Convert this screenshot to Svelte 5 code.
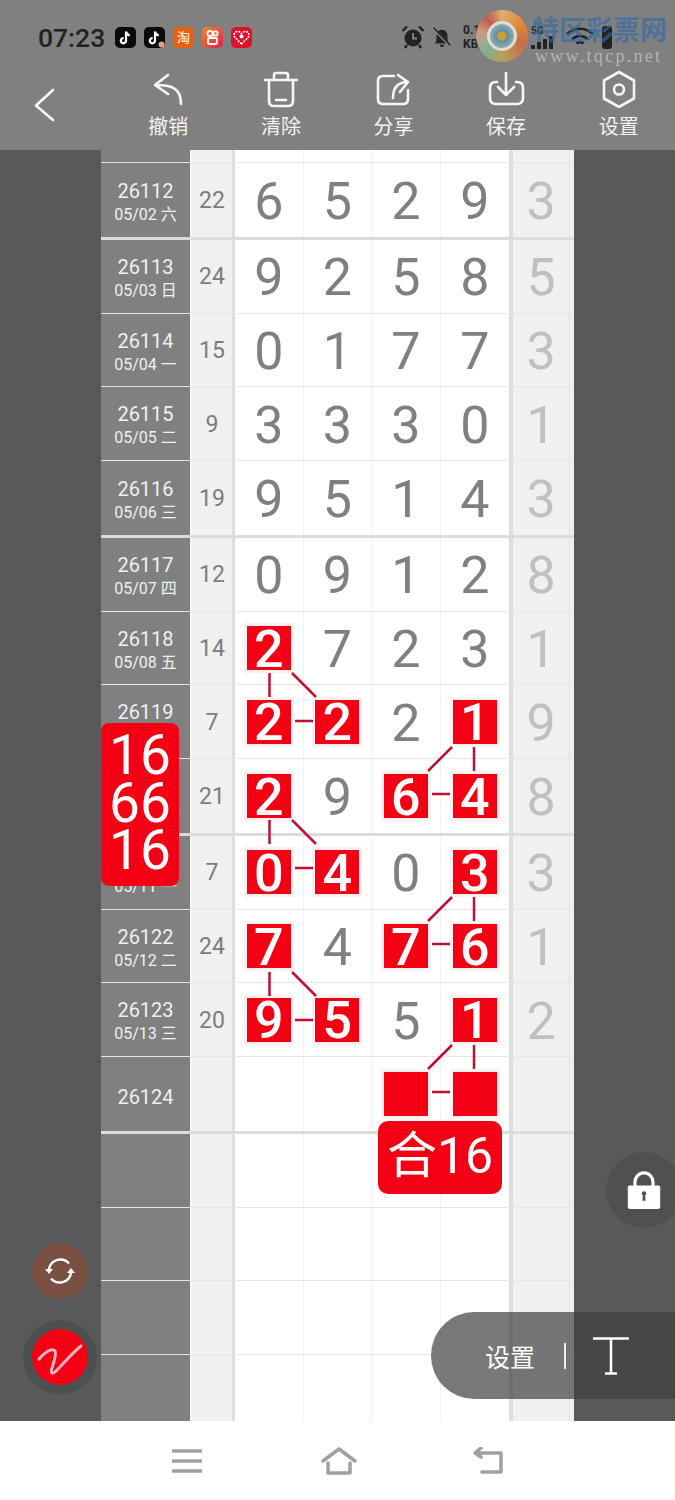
<script>
	const rows = [
		{ no: '26112', date: '05/02 六', sum: '22', d: '6529', last: '3', hit: [], thick: true },
		{ no: '26113', date: '05/03 日', sum: '24', d: '9258', last: '5', hit: [] },
		{ no: '26114', date: '05/04 一', sum: '15', d: '0177', last: '3', hit: [] },
		{ no: '26115', date: '05/05 二', sum: '9', d: '3330', last: '1', hit: [] },
		{ no: '26116', date: '05/06 三', sum: '19', d: '9514', last: '3', hit: [], thick: true },
		{ no: '26117', date: '05/07 四', sum: '12', d: '0912', last: '8', hit: [] },
		{ no: '26118', date: '05/08 五', sum: '14', d: '2723', last: '1', hit: [0] },
		{ no: '26119', date: '05/09 六', sum: '7', d: '2221', last: '9', hit: [0, 1, 3] },
		{ no: '26120', date: '05/10 日', sum: '21', d: '2964', last: '8', hit: [0, 2, 3], thick: true },
		{ no: '26121', date: '05/11 一', sum: '7', d: '0403', last: '3', hit: [0, 1, 3] },
		{ no: '26122', date: '05/12 二', sum: '24', d: '7476', last: '1', hit: [0, 2, 3] },
		{ no: '26123', date: '05/13 三', sum: '20', d: '9551', last: '2', hit: [0, 1, 3] },
		{ no: '26124', date: '', sum: '', d: '    ', last: '', hit: [2, 3], thick: true },
		{ no: '', date: '', sum: '', d: '    ', last: '', hit: [] },
		{ no: '', date: '', sum: '', d: '    ', last: '', hit: [] },
		{ no: '', date: '', sum: '', d: '    ', last: '', hit: [] },
		{ no: '', date: '', sum: '', d: '    ', last: '', hit: [] }
	];

	// connector groups: y of the upper square's bottom edge
	const leftLinks = [673, 820, 972];
	const rightLinks = [747, 897, 1045];
</script>

<div class="screen">
	<header class="top">
		<div class="status">
			<span class="time">07:23</span>
			<div class="apps">
				<span class="app black">
					<svg viewBox="0 0 21 21" width="21" height="21"><path d="M11 4.5v9.2a2.6 2.6 0 1 1-2.4-2.6M11 4.5c.3 2.2 1.7 3.6 3.8 3.8" fill="none" stroke="#fff" stroke-width="2.2" /></svg>
				</span>
				<span class="app black">
					<svg viewBox="0 0 21 21" width="21" height="21"><path d="M11 4.5v9.2a2.6 2.6 0 1 1-2.4-2.6M11 4.5c.3 2.2 1.7 3.6 3.8 3.8" fill="none" stroke="#fff" stroke-width="2.2" /><circle cx="17.5" cy="17.5" r="3" fill="#e0a080" /></svg>
				</span>
				<span class="app orange">淘</span>
				<span class="app pink">
					<svg viewBox="0 0 21 21" width="21" height="21"><circle cx="8" cy="6.5" r="2.6" fill="none" stroke="#fff" stroke-width="1.8" /><circle cx="13.5" cy="6.5" r="2.2" fill="none" stroke="#fff" stroke-width="1.8" /><rect x="6" y="11" width="9" height="6" rx="1.5" fill="none" stroke="#fff" stroke-width="1.8" /></svg>
				</span>
				<span class="app red">
					<svg viewBox="0 0 21 21" width="21" height="21"><path d="M10.5 17 4 10.5C2 8 3.500 4.500 6.800 4.500c1.600 0 2.900.9 3.700 2.200.8-1.300 2.100-2.200 3.700-2.200 3.300 0 4.800 3.500 2.800 6Z" fill="none" stroke="#fff" stroke-width="1.500" stroke-dasharray="2 1" /><circle cx="10.500" cy="9.500" r="2" fill="#fff" /></svg>
				</span>
			</div>
			<div class="sys">
				<svg viewBox="0 0 24 24" width="24" height="24"><circle cx="12" cy="13" r="8.500" fill="#222" /><path d="M12 8v5.500h4" fill="none" stroke="#888" stroke-width="1.800" /><path d="M1.500 6 6 1.500M22.500 6 18 1.500M6 20l-2 3M18 20l2 3" stroke="#222" stroke-width="2.400" /></svg>
				<svg viewBox="0 0 24 24" width="22" height="24"><path d="M4 19c2-2 2-4 2-8s2.500-7 6-7 6 3 6 7 0 6 2 8Z" fill="#222" /><path d="M9.500 20.500a2.500 2.500 0 0 0 5 0" fill="#222" /><path d="M3 3l18 19" stroke="#888" stroke-width="3" /><path d="M3 2l18 19" stroke="#222" stroke-width="1.600" /></svg>
				<span class="speed">0.11<br />KB/s</span>
				<div class="cell">
					<span class="bars"><i></i><i></i><i></i><i></i></span>
				</div>
				<div class="cell second">
					<span class="fiveg">5G</span>
					<span class="bars"><i></i><i></i><i></i><i></i></span>
				</div>
				<svg class="wifi" viewBox="0 0 30 22" width="30" height="22"><path d="M2 8c8-7 18-7 26 0M7 13c5-4 11-4 16 0M11.500 17.500c2-1.500 5-1.500 7 0" fill="none" stroke="#222" stroke-width="2.600" /></svg>
				<span class="battery"></span>
			</div>
		</div>

		<!-- site watermark burnt over the status bar -->
		<div class="mark">
			<div class="swirl"><span class="swirl-core"></span></div>
			<div class="mark-name">特区彩票网</div>
			<div class="mark-url">www.tqcp.net</div>
		</div>

		<nav class="toolbar">
			<div class="back">
				<svg viewBox="0 0 32 40" width="32" height="40"><path d="M24 5 7 20.500 24 35" /></svg>
			</div>
			<div class="tool">
				<svg viewBox="0 0 40 40" width="40" height="40"><path d="M20 7 7 17l13 9M8 17c14 0 25 2 25 19" /></svg>
				<span>撤销</span>
			</div>
			<div class="tool">
				<svg viewBox="0 0 40 40" width="40" height="40"><path d="M4 12h32M13 12V7q0-2 2-2h10q2 0 2 2v5M8 12v21q0 5 5 5h14q5 0 5-5V12M15 32h10" /></svg>
				<span>清除</span>
			</div>
			<div class="tool">
				<svg viewBox="0 0 40 40" width="40" height="40"><path d="M21 8H10q-5 0-5 5v18q0 5 5 5h20q5 0 5-5v-9M20 30q0-16 15-16M25 7l10 7-8 10" /></svg>
				<span>分享</span>
			</div>
			<div class="tool">
				<svg viewBox="0 0 40 40" width="40" height="40"><path d="M11 14h-1q-6 0-6 6v10q0 6 6 6h21q6 0 6-6V20q0-6-6-6h-1M20 5v22M12 19l8 8 8-8" /></svg>
				<span>保存</span>
			</div>
			<div class="tool">
				<svg viewBox="0 0 40 40" width="40" height="40"><path d="M20 4 35 12.500v18L20 39 5 30.500v-18Z" /><circle cx="20" cy="21.500" r="5" /></svg>
				<span>设置</span>
			</div>
		</nav>
	</header>

	<main class="board">
		<div class="table">
			<div class="row stub">
				<div class="label"></div>
				<div class="sum"></div>
				<div class="bar"></div>
				<div class="num"></div>
				<div class="num"></div>
				<div class="num"></div>
				<div class="num"></div>
				<div class="bar"></div>
				<div class="extra"></div>
				<div class="edge"></div>
			</div>
			{#each rows as r}
				<div class="row" class:thick={r.thick}>
					<div class="label">
						<span class="no">{r.no}</span>
						{#if r.date}<span class="date">{r.date}</span>{/if}
					</div>
					<div class="sum">{r.sum}</div>
					<div class="bar"></div>
					{#each [0, 1, 2, 3] as i}
						<div class="num">
							{#if r.hit.includes(i)}
								<span class="hit">{r.d[i].trim()}</span>
							{:else}
								{r.d[i].trim()}
							{/if}
						</div>
					{/each}
					<div class="bar"></div>
					<div class="extra">{r.last}</div>
					<div class="edge"></div>
				</div>
			{/each}
		</div>

		<svg class="links" viewBox="0 150 675 1271" width="675" height="1271">
			{#each leftLinks as y}
				<path d="M269.500 {y}v24M292 {y}l24 {24}M295 {y + 48}h18" />
			{/each}
			{#each rightLinks as y}
				<path d="M474 {y}v24M452 {y}l-24 {24}M432 {y + 47}h18" />
			{/each}
		</svg>

		<div class="tip-left">16<br />66<br />16</div>
		<div class="tip-sum">合16</div>

		<div class="lock">
			<svg viewBox="0 0 40 44" width="36" height="40"><path d="M10 20v-7a10 10 0 0 1 20 0v7" fill="none" stroke="#fff" stroke-width="3.500" /><rect x="2" y="17" width="36" height="26" rx="2" fill="#fff" /><circle cx="20" cy="26" r="2.500" fill="#505050" /><path d="M19 26h2l.8 8h-3.600Z" fill="#505050" /></svg>
		</div>

		<div class="refresh">
			<svg viewBox="0 0 32 32" width="32" height="32"><path d="M5 14A11.500 11.500 0 0 1 25 8.500M27 18A11.500 11.500 0 0 1 7 23.500" fill="none" stroke="#fff" stroke-width="2.400" /><path d="M1 14h8l-4 5ZM31 18h-8l4-5Z" fill="#fff" /></svg>
		</div>

		<div class="pen">
			<div class="pen-dot">
				<svg viewBox="0 0 56 56" width="56" height="56"><path d="M7 30c5-6 13-12 16-8 3 5-6 20-3 22 3 2 15-16 29-27" fill="none" stroke="#f8b4bc" stroke-width="3" stroke-linecap="round" /></svg>
			</div>
		</div>

		<div class="font-pill">
			<span class="pill-text">设置</span>
			<span class="pill-div"></span>
			<svg viewBox="0 0 36 38" width="36" height="38"><path d="M0 1.500h36M18 1.500V36M12 36.500h12" fill="none" stroke="#fff" stroke-width="2.500" /></svg>
		</div>
	</main>

	<footer class="navbar">
		<svg viewBox="0 0 30 26" width="30" height="26"><path d="M1 3h28M1 13h28M1 23h28" /></svg>
		<svg class="nav-home" viewBox="0 0 36 28" width="36" height="28"><path d="M2 14 18 2l16 12M7 16v10h22V16" /></svg>
		<svg class="nav-back" viewBox="0 0 32 28" width="32" height="28"><path d="M3 6h26v19H10M9 1 3 6l6 4" /></svg>
	</footer>
</div>

<style>
	:global(body) {
		margin: 0;
	}

	.screen {
		width: 675px;
		height: 1500px;
		display: flex;
		flex-direction: column;
		overflow: hidden;
		font-family: 'Roboto', 'Noto Sans CJK SC', sans-serif;
	}

	.top {
		position: relative;
		height: 150px;
		flex-shrink: 0;
		background: #808080;
	}

	.status {
		height: 74px;
		display: flex;
		align-items: center;
		padding-left: 38px;
		box-sizing: border-box;
	}

	.time {
		font-size: 26.5px;
		font-weight: 500;
		color: #222;
		width: 77px;
	}

	.apps {
		display: flex;
		gap: 8px;
	}

	.app {
		width: 21px;
		height: 21px;
		border-radius: 5px;
		display: flex;
		align-items: center;
		justify-content: center;
		color: #fff;
		font-size: 13px;
		line-height: 1;
	}

	.black {
		background: #0a0a0a;
	}

	.orange {
		background: #e8600c;
	}

	.pink {
		background: linear-gradient(135deg, #ee8a24, #e01f55);
	}

	.red {
		background: #e0102a;
	}

	.sys {
		display: flex;
		align-items: center;
		margin-left: 149px;
		gap: 6px;
	}

	.speed {
		font-size: 12px;
		font-weight: 700;
		line-height: 14px;
		color: #222;
		width: 30px;
		margin-left: 4px;
	}

	.cell {
		width: 23px;
		display: flex;
		flex-direction: column;
		justify-content: flex-end;
		height: 24px;
	}

	.second {
		margin-left: 3px;
		width: 27px;
	}

	.fiveg {
		font-size: 10px;
		font-weight: 700;
		line-height: 11px;
		color: #222;
	}

	.bars {
		display: flex;
		align-items: flex-end;
		gap: 2px;
		height: 13px;
	}

	.bars i {
		width: 4px;
		background: #222;
	}

	.bars i:nth-child(1) {
		height: 4px;
	}

	.bars i:nth-child(2) {
		height: 7px;
	}

	.bars i:nth-child(3) {
		height: 10px;
	}

	.bars i:nth-child(4) {
		height: 13px;
	}

	.wifi {
		margin-left: 1px;
	}

	.battery {
		width: 10px;
		height: 23px;
		background: #222;
		border-radius: 3px;
		margin-left: 1px;
	}

	.mark {
		position: absolute;
		left: 475px;
		top: 10px;
		width: 200px;
		height: 56px;
	}

	.swirl {
		position: absolute;
		left: 1px;
		top: 0;
		width: 52px;
		height: 52px;
		border-radius: 50%;
		background: conic-gradient(#d8b070, #e08a3c, #c86a48 110deg, #b8a058 180deg, #7fb09a 230deg, #c9a080 280deg, #c05a50 320deg, #d8b070);
		display: flex;
		align-items: center;
		justify-content: center;
	}

	.swirl-core {
		width: 24px;
		height: 24px;
		border-radius: 50%;
		background: radial-gradient(#c8a030 25%, #5f8fa8 30%, #8faab0 70%);
		border: 3px solid #dfdfcf;
	}

	.mark-name {
		position: absolute;
		left: 57px;
		top: 6px;
		font-size: 27px;
		font-weight: 700;
		line-height: 30px;
		white-space: nowrap;
		color: #2f6aa8;
		opacity: 0.62;
	}

	.mark-url {
		position: absolute;
		left: 60px;
		top: 36px;
		font-family: 'Liberation Serif', serif;
		font-size: 18px;
		line-height: 20px;
		letter-spacing: 2.3px;
		white-space: nowrap;
		color: #b4b4b4;
	}

	.toolbar {
		height: 76px;
		display: flex;
	}

	.back {
		width: 112px;
		padding: 11px 0 0 29px;
		box-sizing: border-box;
	}

	.tool {
		width: 112.6px;
		display: flex;
		flex-direction: column;
		align-items: center;
		margin-top: -6px;
	}

	.tool span {
		font-size: 20px;
		line-height: 26px;
		margin-top: 6px;
		color: #f2f2f2;
	}

	.toolbar svg path,
	.toolbar svg circle {
		fill: none;
		stroke: #f6f6f6;
		stroke-width: 2.6;
		stroke-linejoin: round;
		stroke-linecap: round;
	}

	.board {
		position: relative;
		height: 1271px;
		flex-shrink: 0;
		background: #595959;
		overflow: hidden;
	}

	.table {
		width: 473px;
		margin-left: 101px;
	}

	.row {
		display: grid;
		grid-template-columns: 89px 42px 3px repeat(4, 68.5px) 4px 57px 4px;
		height: 73.6px;
		box-sizing: border-box;
		border-bottom: 1.5px solid #e6e6e6;
		background: #fff;
	}

	.row.stub {
		height: 13px;
	}

	.row.thick {
		height: 77.2px;
		border-bottom: 3.6px solid #dcdcdc;
	}

	.row > div {
		display: flex;
		align-items: center;
		justify-content: center;
	}

	.label {
		flex-direction: column;
		background: #808080;
		color: #f0f0f0;
		padding-top: 3px;
		box-sizing: border-box;
	}

	.no {
		font-size: 20px;
		line-height: 24px;
		margin-top: 2px;
	}

	.date {
		font-size: 16px;
		line-height: 24px;
	}

	.sum {
		background: #f0f0f0;
		border-left: 2px solid #f8f8f8;
		box-sizing: border-box;
		color: #7c7c7c;
		font-size: 23px;
		padding-top: 1px;
	}

	.bar {
		background: #dedede;
	}

	.num {
		position: relative;
		color: #808080;
		font-size: 52px;
		font-weight: 450;
		border-right: 1px solid #f1f1f1;
		box-sizing: border-box;
		padding-top: 3px;
	}

	.num:nth-child(7) {
		border-right: 0;
	}

	.hit {
		width: 44px;
		height: 44px;
		margin-top: -3px;
		padding-top: 2px;
		box-sizing: border-box;
		display: flex;
		align-items: center;
		justify-content: center;
		background: #f40014;
		box-shadow: 0 0 0 3px #f6f0f0;
		color: #fff;
		font-weight: 500;
	}

	.extra {
		background: #f0f0f0;
		border-right: 1px solid #e2e2e2;
		box-sizing: content-box;
		color: #c0c0c0;
		font-size: 52px;
		font-weight: 450;
		width: 56px;
		padding-top: 3px;
	}

	.edge {
		background: #f0f0f0;
	}

	.links {
		position: absolute;
		left: 0;
		top: 0;
		pointer-events: none;
	}

	.links path {
		fill: none;
		stroke: #c01030;
		stroke-width: 2.500;
	}

	.tip-left {
		position: absolute;
		left: 101px;
		top: 573px;
		width: 78px;
		height: 163px;
		box-sizing: border-box;
		padding-top: 9px;
		border-radius: 8px;
		background: #f40014;
		color: #fff;
		font-size: 55px;
		line-height: 47.500px;
		text-align: center;
	}

	.tip-sum {
		position: absolute;
		left: 378px;
		top: 971px;
		width: 124px;
		height: 73px;
		border-radius: 10px;
		background: #f40014;
		color: #fff;
		font-size: 50px;
		line-height: 70px;
		text-align: center;
	}

	.lock {
		position: absolute;
		left: 606px;
		top: 1002px;
		width: 76px;
		height: 76px;
		border-radius: 50%;
		background: #505050;
		display: flex;
		align-items: center;
		justify-content: center;
	}

	.refresh {
		position: absolute;
		left: 32px;
		top: 1093px;
		width: 56px;
		height: 56px;
		border-radius: 50%;
		background: #7a5042;
		display: flex;
		align-items: center;
		justify-content: center;
	}

	.pen {
		position: absolute;
		left: 23px;
		top: 1170px;
		width: 74px;
		height: 74px;
		border-radius: 50%;
		background: #4b5151;
		display: flex;
		align-items: center;
		justify-content: center;
	}

	.pen-dot {
		width: 56px;
		height: 56px;
		border-radius: 50%;
		background: #f40014;
	}

	.font-pill {
		position: absolute;
		right: 0;
		top: 1162px;
		width: 244px;
		height: 87px;
		border-radius: 44px 0 0 44px;
		background: rgba(64, 64, 64, 0.7);
		display: flex;
		align-items: center;
		padding-left: 54px;
		box-sizing: border-box;
	}

	.pill-text {
		color: #fff;
		font-size: 25px;
		width: 79px;
	}

	.pill-div {
		width: 2px;
		height: 26px;
		background: #eee;
		margin-right: 27px;
	}

	.navbar {
		flex: 1;
		background: #fff;
		display: flex;
		align-items: center;
		padding-left: 172px;
		gap: 119px;
	}

	.nav-back {
		margin-left: -4px;
	}

	.navbar svg path {
		fill: none;
		stroke: #a0a0a0;
		stroke-width: 3.5;
		stroke-linejoin: round;
		stroke-linecap: round;
	}
</style>
